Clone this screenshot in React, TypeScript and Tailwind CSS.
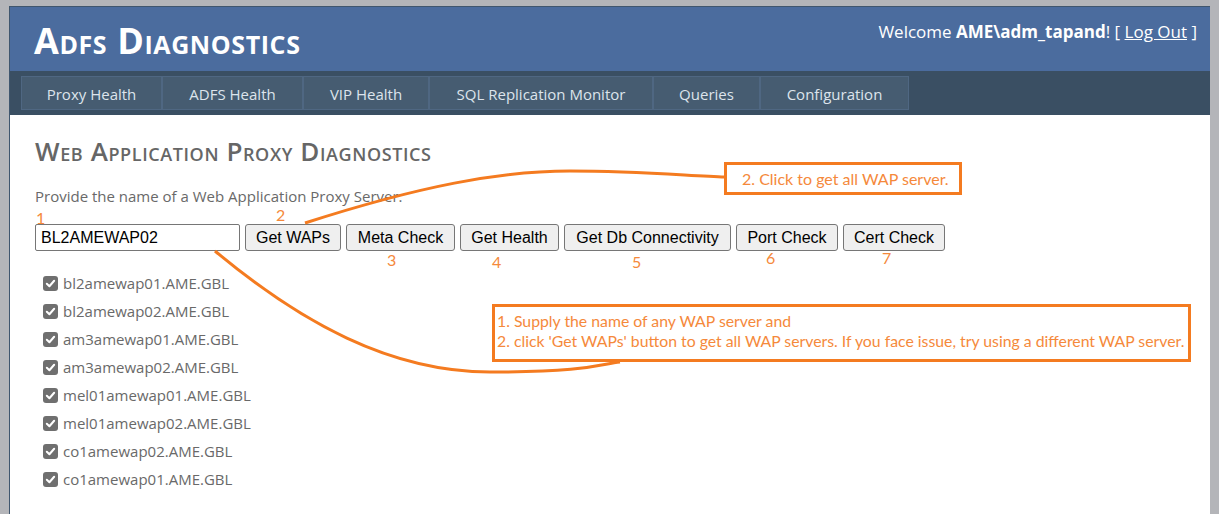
import React from "react";

const navItems = [
  { label: "Proxy Health", w: "w-[141px]" },
  { label: "ADFS Health", w: "w-[141px]" },
  { label: "VIP Health", w: "w-[126px]" },
  { label: "SQL Replication Monitor", w: "w-[224px]" },
  { label: "Queries", w: "w-[107px]" },
  { label: "Configuration", w: "w-[149px]" },
];

const actions = [
  { label: "Get WAPs", w: "w-[96px]" },
  { label: "Meta Check", w: "w-[109px]" },
  { label: "Get Health", w: "w-[99px]" },
  { label: "Get Db Connectivity", w: "w-[167px]" },
  { label: "Port Check", w: "w-[102px]" },
  { label: "Cert Check", w: "w-[102px]" },
];

const servers = [
  "bl2amewap01.AME.GBL",
  "bl2amewap02.AME.GBL",
  "am3amewap01.AME.GBL",
  "am3amewap02.AME.GBL",
  "mel01amewap01.AME.GBL",
  "mel01amewap02.AME.GBL",
  "co1amewap02.AME.GBL",
  "co1amewap01.AME.GBL",
];

// step numbers drawn over the form, as in the annotated screenshot
const steps = [
  { n: "1", cls: "left-[36px] top-[209px]" },
  { n: "2", cls: "left-[276px] top-[206px]" },
  { n: "3", cls: "left-[387px] top-[251px]" },
  { n: "4", cls: "left-[492px] top-[253px]" },
  { n: "5", cls: "left-[632px] top-[253px]" },
  { n: "6", cls: "left-[766px] top-[249px]" },
  { n: "7", cls: "left-[882px] top-[249px]" },
];

function Check() {
  return (
    <span className="w-[15px] h-[15px] rounded-[3px] bg-[#6f6f6f] flex items-center justify-center shrink-0">
      <svg width="11" height="11" viewBox="0 0 12 12" fill="none">
        <path d="M2 6.3 4.8 9 10 3" stroke="white" strokeWidth="2.2" strokeLinecap="round" strokeLinejoin="round" />
      </svg>
    </span>
  );
}

export default function App() {
  return (
    <div className="relative min-h-screen bg-[#b4b5b9] pt-[6px] px-[9px] font-['Open_Sans',sans-serif]">
      <div className="bg-white border-l border-t border-[#40566e] min-h-[508px]">
        <header className="h-[64px] bg-[#4b6c9e] flex justify-between">
          <h1 className="pl-[24px] pt-[12px] text-white font-bold text-[36px] leading-[44px] [font-variant:small-caps] tracking-[0.6px]">
            Adfs Diagnostics
          </h1>
          <div className="pr-[13px] pt-[13px] text-white text-[17px] leading-[24px]">
            Welcome <b>AME\adm_tapand</b>! [ <span className="underline">Log Out</span> ]
          </div>
        </header>

        <nav className="bg-[#3a4f63] h-[44px] pl-[11px] pt-[5px] flex">
          {navItems.map((item) => (
            <div
              key={item.label}
              className={`${item.w} h-[34px] pt-[2px] bg-[#465c71] border border-[#4f6782] text-[#dde4ec] text-[15px] flex items-center justify-center`}
            >
              {item.label}
            </div>
          ))}
        </nav>

        <main className="pl-[25px] pt-[20px] pb-4 text-[#696969]">
          <h2 className="text-[26px] leading-[32px] font-semibold text-[#666] [font-variant:small-caps] tracking-[0.6px]">
            Web Application Proxy Diagnostics
          </h2>
          <p className="mt-[19px] text-[15px] leading-[20px]">
            Provide the name of a Web Application Proxy Server:
          </p>

          <div className="mt-[18px] flex gap-[5px] font-['Liberation_Sans',Arial,sans-serif] text-[16px]">
            <input
              readOnly
              value="BL2AMEWAP02"
              className="w-[205px] h-[27px] border border-[#767676] rounded-[2px] px-[5px] text-black outline-none"
            />
            {actions.map((a) => (
              <button
                key={a.label}
                className={`${a.w} h-[27px] bg-[#efefef] border border-[#767676] rounded-[3px] text-black`}
              >
                {a.label}
              </button>
            ))}
          </div>

          <ul className="mt-[22px] pl-[8px] flex flex-col gap-[8px]">
            {servers.map((s) => (
              <li key={s} className="flex items-center gap-[5px] h-[20px] text-[15px]">
                <Check />
                <span>{s}</span>
              </li>
            ))}
          </ul>
        </main>
      </div>

      {/* annotations */}
      <svg className="absolute inset-0 pointer-events-none" width="1219" height="514" viewBox="0 0 1219 514" fill="none">
        <path d="M305 223 C420 186 500 171 570 171 S690 176 725 177" stroke="#f47b20" strokeWidth="3" />
        <path d="M215 251 C300 322 390 372 490 372 S600 364 620 362" stroke="#f47b20" strokeWidth="3" />
      </svg>

      {steps.map((s) => (
        <span
          key={s.n}
          className={`absolute ${s.cls} text-[#f5893b] text-[16px] leading-[18px] font-['Lato',sans-serif]`}
        >
          {s.n}
        </span>
      ))}

      <div className="absolute left-[724px] top-[162px] w-[238px] h-[33px] border-[3px] border-[#f47b20] bg-white flex items-center pl-[15px] text-[#f5893b] text-[16px] font-['Lato',sans-serif]">
        2. Click to get all WAP server.
      </div>

      <div className="absolute left-[492px] top-[304px] w-[699px] h-[58px] border-[3px] border-[#f47b20] bg-white pl-[2px] pt-[4px] text-[#f5893b] text-[15.8px] leading-[20px] whitespace-nowrap font-['Lato',sans-serif]">
        <div>1. Supply the name of any WAP server and</div>
        <div>2. click 'Get WAPs' button to get all WAP servers. If you face issue, try using a different WAP server.</div>
      </div>
    </div>
  );
}
